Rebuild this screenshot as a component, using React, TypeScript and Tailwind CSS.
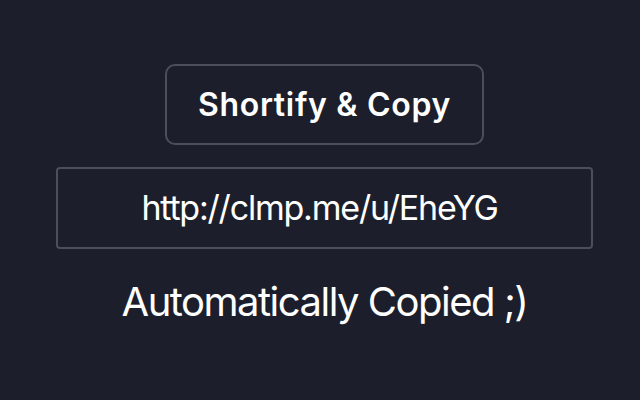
import React from "react";

export default function App() {
  return (
    <div className="w-[640px] h-[400px] bg-[#1c1f2b] flex flex-col items-center pt-[64px] pl-[9px]" style={{ fontFamily: "Inter, 'Noto Sans', sans-serif" }}>
      <button className="w-[319px] h-[81px] rounded-[10px] border-2 border-[#4b4f5a] bg-[#1c1f2b] text-white text-[32px] font-semibold leading-none tracking-[0.7px]">
        Shortify &amp; Copy
      </button>
      <div className="mt-[22px] w-[537px] h-[82px] rounded-[4px] border-2 border-[#4b4f5a] flex items-center justify-center pr-[10px] text-white text-[34px] leading-none tracking-[-1.2px]">
        http://clmp.me/u/EheYG
      </div>
      <div className="mt-[33px] text-white text-[40px] leading-none tracking-[-1.5px]">
        Automatically Copied ;)
      </div>
    </div>
  );
}
